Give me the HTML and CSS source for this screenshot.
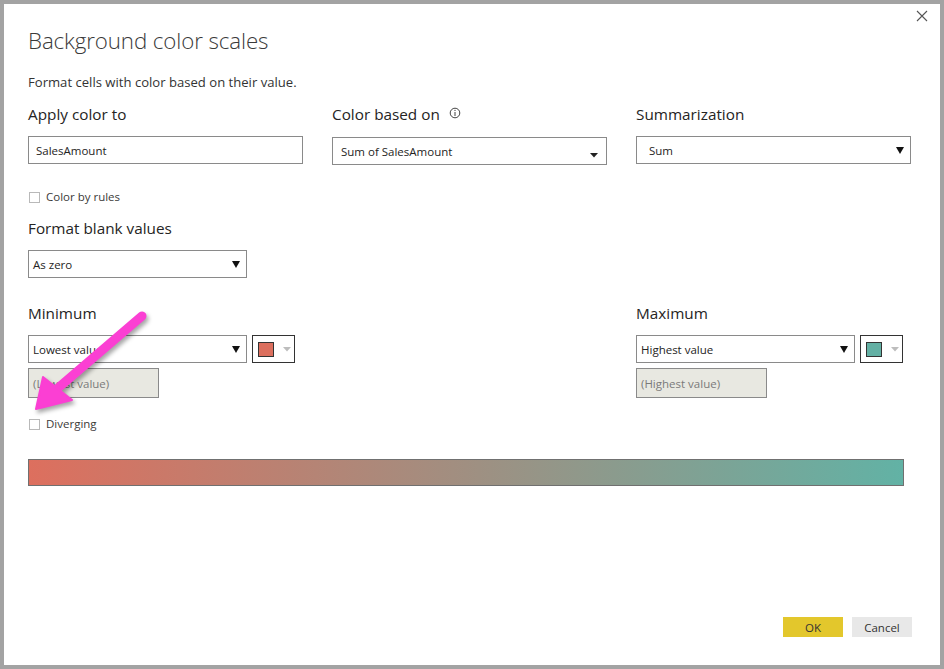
FILE: index.html
```html
<!DOCTYPE html>
<html lang="en">
<head>
<meta charset="utf-8">
<title>Background color scales</title>
<link rel="stylesheet" href="styles.css">
</head>
<body>
<div class="dialog">
  <button class="close" aria-label="Close">
    <svg width="12" height="12" viewBox="0 0 12 12"><path d="M1 1 L11 11 M11 1 L1 11" stroke="#555" stroke-width="1.1" fill="none"/></svg>
  </button>
  <h1 class="title">Background color scales</h1>
  <p class="subtitle">Format cells with color based on their value.</p>

  <div class="grid3 top-row">
    <div class="field">
      <div class="label">Apply color to</div>
      <div class="box text-apply">SalesAmount</div>
    </div>
    <div class="field">
      <div class="label">Color based on
        <svg class="info" width="12" height="12" viewBox="0 0 12 12"><circle cx="6" cy="6" r="4.8" fill="none" stroke="#444" stroke-width="1"/><path d="M6 5 V9" stroke="#444" stroke-width="1"/><circle cx="6" cy="3.4" r="0.6" fill="#444"/></svg>
      </div>
      <div class="box select based">
        <span>Sum of SalesAmount</span>
        <svg class="caret-small" width="8" height="5" viewBox="0 0 8 5"><path d="M0 0 H8 L4 4.5 Z" fill="#222"/></svg>
      </div>
    </div>
    <div class="field">
      <div class="label">Summarization</div>
      <div class="box select summ">
        <span>Sum</span>
        <svg class="caret" width="8" height="8" viewBox="0 0 8 8"><path d="M0 1 H8 L4 8 Z" fill="#111"/></svg>
      </div>
    </div>
  </div>

  <div class="check rules"><span class="cb"></span>Color by rules</div>

  <div class="label blank-label">Format blank values</div>
  <div class="box select blank">
    <span>As zero</span>
    <svg class="caret" width="8" height="8" viewBox="0 0 8 8"><path d="M0 1 H8 L4 8 Z" fill="#111"/></svg>
  </div>

  <div class="grid3 minmax">
    <div class="group">
      <div class="label">Minimum</div>
      <div class="pick-row">
        <div class="box select pick">
          <span>Lowest value</span>
          <svg class="caret" width="8" height="8" viewBox="0 0 8 8"><path d="M0 1 H8 L4 8 Z" fill="#111"/></svg>
        </div>
        <div class="swatch-btn">
          <span class="swatch low"></span>
          <svg width="8" height="5" viewBox="0 0 8 5"><path d="M0 0 H8 L4 4.5 Z" fill="#bdbdbd"/></svg>
        </div>
      </div>
      <div class="box placeholder">(Lowest value)</div>
      <div class="check diverging"><span class="cb"></span>Diverging</div>
    </div>
    <div></div>
    <div class="group">
      <div class="label">Maximum</div>
      <div class="pick-row">
        <div class="box select pick">
          <span>Highest value</span>
          <svg class="caret" width="8" height="8" viewBox="0 0 8 8"><path d="M0 1 H8 L4 8 Z" fill="#111"/></svg>
        </div>
        <div class="swatch-btn">
          <span class="swatch high"></span>
          <svg width="8" height="5" viewBox="0 0 8 5"><path d="M0 0 H8 L4 4.5 Z" fill="#bdbdbd"/></svg>
        </div>
      </div>
      <div class="box placeholder">(Highest value)</div>
    </div>
  </div>

  <div class="gradient"></div>

  <div class="footer">
    <button class="btn ok">OK</button>
    <button class="btn cancel">Cancel</button>
  </div>

  <svg class="pointer" width="150" height="130" viewBox="20 295 150 130">
    <g class="pointer-g">
      <path d="M142 316 L58 388" stroke="#fb3fd3" stroke-width="9" stroke-linecap="round" fill="none"/>
      <path d="M36 409 L43 377 L72 400 Z" fill="#fb3fd3" stroke="#fb3fd3" stroke-width="2" stroke-linejoin="round"/>
    </g>
  </svg>
</div>
</body>
</html>
```

FILE: styles.css
```css
* { box-sizing: border-box; }

html, body {
  margin: 0;
  padding: 0;
  background: #ffffff;
}

body {
  width: 944px;
  height: 669px;
  font-family: "Open Sans", "Noto Sans", "Liberation Sans", sans-serif;
  color: #252423;
}

.dialog {
  position: relative;
  width: 944px;
  height: 669px;
  border: 4px solid #a3a3a3;
  background: #ffffff;
  padding: 0 28px 28px 24px;
  display: flex;
  flex-direction: column;
  align-items: flex-start;
}

.close {
  position: absolute;
  top: 3px;
  right: 9px;
  width: 18px;
  height: 18px;
  padding: 0;
  border: 0;
  background: transparent;
  display: flex;
  align-items: center;
  justify-content: center;
}

.title {
  margin: 22px 0 0 0;
  font-size: 22.3px;
  line-height: 30px;
  font-weight: 300;
  color: #3a3a3a;
  letter-spacing: -0.1px;
}

.subtitle {
  margin: 17px 0 0 0;
  font-size: 13.1px;
  line-height: 18px;
  color: #333333;
}

.label {
  font-size: 15.3px;
  line-height: 22px;
  color: #252423;
  display: flex;
  align-items: center;
}

.label .info {
  margin-left: 9px;
  margin-top: -3px;
}

.grid3 {
  display: grid;
  grid-template-columns: 275px 275px 275px;
  column-gap: 29px;
}

.top-row {
  margin-top: 12px;
}

.field .box {
  margin-top: 11px;
}

.box {
  height: 28px;
  border: 1px solid #8a8a8a;
  background: #ffffff;
  font-size: 11.5px;
  color: #252423;
  display: flex;
  align-items: center;
}

.text-apply {
  padding-left: 7px;
}

.select {
  justify-content: space-between;
  padding-right: 6px;
}

.based {
  padding-left: 8px;
  padding-right: 8px;
  margin-top: 12px !important;
}

.based .caret-small {
  margin-top: 8px;
}

.summ {
  padding-left: 12px;
}

.check {
  display: flex;
  align-items: center;
  font-size: 11.5px;
  line-height: 18px;
  color: #3b3a39;
}

.cb {
  width: 11px;
  height: 11px;
  border: 1px solid #b9b9b9;
  background: #ffffff;
  margin-left: 1px;
  margin-right: 6px;
}

.rules {
  margin-top: 23px;
}

.blank-label {
  margin-top: 11px;
}

.blank {
  margin-top: 11px;
  width: 219px;
  padding-left: 4px;
}

.minmax {
  margin-top: 24px;
}

.group {
  display: flex;
  flex-direction: column;
  align-items: flex-start;
}

.pick-row {
  margin-top: 11px;
  display: flex;
  gap: 5px;
}

.pick {
  width: 219px;
  padding-left: 4px;
}

.swatch-btn {
  width: 43px;
  height: 28px;
  border: 1px solid #333333;
  background: #ffffff;
  display: flex;
  align-items: center;
  padding-left: 5px;
  gap: 9px;
}

.swatch {
  width: 16px;
  height: 15px;
  border: 1px solid #333333;
}

.swatch.low { background: #dc6f5e; }
.swatch.high { background: #63b0a4; }

.placeholder {
  margin-top: 5px;
  width: 131px;
  height: 30px;
  background: #e8e8e1;
  color: #7a7a7a;
  padding-left: 4px;
}

.diverging {
  margin-top: 17px;
}

.gradient {
  margin-top: 26px;
  width: 876px;
  height: 27px;
  border: 1px solid #707070;
  background: linear-gradient(to right, #dd6f5e, #a08f81 50%, #62b2a5);
}

.footer {
  margin-top: auto;
  align-self: stretch;
  display: flex;
  justify-content: flex-end;
  gap: 9px;
}

.btn {
  width: 60px;
  height: 20px;
  border: 0;
  padding: 0;
  font-family: "Open Sans", "Noto Sans", "Liberation Sans", sans-serif;
  font-size: 11.5px;
  color: #333333;
}

.ok { background: #e3c72c; }
.cancel { background: #e8e8e8; }

.pointer {
  position: absolute;
  left: 16px;
  top: 291px;
  overflow: visible;
  pointer-events: none;
}

.pointer-g {
  filter: drop-shadow(2px 3px 2px rgba(0, 0, 0, 0.35));
}
```
